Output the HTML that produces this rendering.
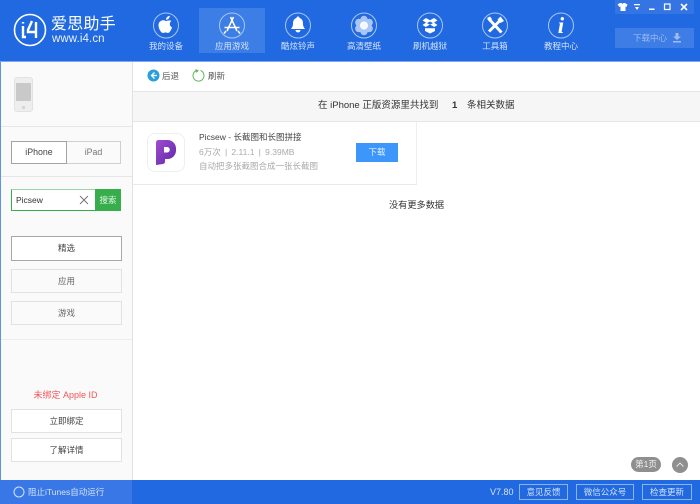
<!DOCTYPE html>
<html><head><meta charset="utf-8"><style>
*{box-sizing:border-box;margin:0;padding:0}
html,body{width:700px;height:504px;overflow:hidden;background:#fff}
body{font-family:"Liberation Sans","Noto Sans CJK SC",sans-serif;font-size:8.5px;position:relative;color:#333}
.a{position:absolute}
.t{position:absolute;white-space:nowrap;text-align:center}
.btn{position:absolute;text-align:center;border:1px solid #e2e2e2;background:#fafafa;color:#666}
.nl{position:absolute;top:40px;width:66px;text-align:center;color:#d5e3fa;font-size:8.5px;line-height:13px}
.bb{position:absolute;top:484px;height:16px;border:1px solid #8db2ee;color:#d5e3fa;text-align:center;line-height:14px;font-size:8.5px}
</style></head><body>
<div class="a" style="left:0;top:0;width:700px;height:61px;background:#2069e0"></div>
<div class="a" style="left:199px;top:8px;width:66px;height:45px;background:#3d7de6"></div>
<svg class="a" style="left:0;top:0" width="700" height="61" fill="none">
<circle cx="30" cy="30" r="15.500" stroke="#fff" stroke-width="1.600"/>
<path d="M23 26v11h3M23 22v1.500" stroke="#fff" stroke-width="2.400"/>
<path d="M32 21l-4 9v2h9M36 22v16" stroke="#fff" stroke-width="2.400"/>
<g stroke="#a9c6f3" stroke-width="1">
<circle cx="166" cy="25.500" r="12.500"/><circle cx="232" cy="25.500" r="12.500"/><circle cx="298" cy="25.500" r="12.500"/><circle cx="364" cy="25.500" r="12.500"/><circle cx="430" cy="25.500" r="12.500"/><circle cx="495" cy="25.500" r="12.500"/><circle cx="561" cy="25.500" r="12.500"/>
</g>
<path transform="translate(166 25.500) scale(1.250) translate(-166 -24.500)" d="M166 21c1.500-.6 3-1 4.300-.2-1.700 1.200-1.800 4 .5 5.200-.7 2.300-2 4.500-3.300 4.500-.8 0-1-.5-1.900-.5s-1.200.5-2 .5c-1.700 0-3.600-3.700-3.600-6.200 0-3.500 3.700-5 6-3.300zM166 20c0-1.800 1.200-3 3-3.300 0 1.800-1.200 3.200-3 3.300z" fill="#fff"/>
<path d="M233.500 17l-6.500 14M230.500 17l6.500 14M224.500 27.500h15M226 31l-2 2.500M238 31l2 2.500" stroke="#fff" stroke-width="1.500"/>
<path d="M298 16.500a1.500 1.500 0 0 1 1.500 1.500c2.700.8 3.500 3 3.500 5.500 0 3 1 4 2 5.500h-14c1-1.500 2-2.500 2-5.500 0-2.500.8-4.700 3.500-5.500a1.500 1.500 0 0 1 1.500-1.500zM295.500 30h5a2.500 2.500 0 0 1-5 0z" fill="#fff"/>
<g fill="#fff"><circle cx="364" cy="25.500" r="4" opacity=".95"/><g opacity=".62"><circle cx="364" cy="19.500" r="3.700"/><circle cx="364" cy="31.500" r="3.700"/><circle cx="358.800" cy="22.500" r="3.700"/><circle cx="369.200" cy="22.500" r="3.700"/><circle cx="358.800" cy="28.500" r="3.700"/><circle cx="369.200" cy="28.500" r="3.700"/></g></g>
<path d="M426 18l4 2.300 4-2.300 3.500 2.400-3.500 2.200 3.500 2.400-3.300 2-4.200-2.500-4.200 2.500-3.300-2 3.500-2.400-3.500-2.200zM430 21.500l-3 1.600 3 1.700 3-1.700z" fill="#fff" fill-rule="evenodd"/>
<path d="M425 28.300l5 0 5 0v2.700l-5 2.500-5-2.500z" fill="#fff"/>
<path d="M488.500 18.500l13 14M501 19.500l-12 12" stroke="#fff" stroke-width="3"/>
<path d="M487 18l3-1.500 2 2.500-2.500 2.500zM504 21l-3.500 2-3-3.500 3-3z" fill="#fff"/>
<text x="561" y="33" text-anchor="middle" font-family="Liberation Serif,serif" font-style="italic" font-weight="bold" font-size="23" fill="#fff">i</text>
</svg>
<div class="t" style="left:51px;top:15px;font-size:16px;line-height:20px;color:#fff;letter-spacing:.2px">爱思助手</div>
<div class="t" style="left:52px;top:32px;font-size:11.500px;line-height:14px;color:#eaf1fd;letter-spacing:.1px">www.i4.cn</div>
<div class="nl" style="left:133px">我的设备</div>
<div class="nl" style="left:199px">应用游戏</div>
<div class="nl" style="left:265px">酷炫铃声</div>
<div class="nl" style="left:331px">高清壁纸</div>
<div class="nl" style="left:397px">刷机越狱</div>
<div class="nl" style="left:462px">工具箱</div>
<div class="nl" style="left:528px">教程中心</div>

<div class="a" style="left:615px;top:0;width:79px;height:14px;background:#3574e3"></div>
<svg class="a" style="left:615px;top:0" width="79" height="14" fill="#fff">
<path d="M2.500 4.500l2.500-1.500h1.500l1 1 1-1H10l2.500 1.500-1 2.500-1-.5V11h-5V6.500l-1 .5z"/>
<path d="M19 4h6v1.200h-6zM20 7h4l-2 3z"/>
<path d="M34 8.500h5.500V10H34z"/>
<path d="M49.500 4h5.500v5.500h-5.500z" fill="none" stroke="#fff" stroke-width="1.200"/>
<path d="M66 4l6 6M72 4l-6 6" stroke="#fff" stroke-width="1.600"/>
</svg>
<div class="a" style="left:615px;top:28px;width:79px;height:20px;background:#3f7de6"></div>
<div class="t" style="left:633px;top:31px;font-size:8.500px;line-height:14px;color:#9dbcf0">下载中心</div>
<svg class="a" style="left:672px;top:33px" width="10" height="10" fill="#9dbcf0"><path d="M3.500 0h3v3.500H9L5 7 1 3.500h2.500zM1 8h8v1.500H1z"/></svg>

<div class="a" style="left:0;top:61px;width:1px;height:419px;background:#5e93ea"></div>
<div class="a" style="left:1px;top:61px;width:131px;height:419px;background:#fafafa"></div>
<div class="a" style="left:132px;top:61px;width:1px;height:419px;background:#e2e2e2"></div>
<div class="a" style="left:0;top:61px;width:700px;height:1px;background:#7ea8ee"></div>

<div class="a" style="left:14px;top:77px;width:19px;height:35px;background:#eee;border:1px solid #e2e2e2;border-radius:3px"></div>
<div class="a" style="left:16px;top:83px;width:15px;height:18px;background:#c9c9c9"></div>
<div class="a" style="left:22px;top:106px;width:3px;height:3px;border:1px solid #ccc;border-radius:50%"></div>
<div class="a" style="left:1px;top:126px;width:131px;height:1px;background:#e6e6e6"></div>
<div class="btn" style="left:11px;top:141px;width:56px;height:23px;border:1px solid #a3a3a3;background:#fff;color:#444;line-height:21px;font-size:8.800px">iPhone</div>
<div class="btn" style="left:67px;top:141px;width:54px;height:23px;border:1px solid #cfcfcf;border-left:0;color:#777;line-height:21px;font-size:8.800px">iPad</div>
<div class="a" style="left:1px;top:176px;width:131px;height:1px;background:#e6e6e6"></div>
<div class="a" style="left:11px;top:189px;width:85px;height:22px;background:#fff;border:1px solid #35ae4b;border-top-color:#9bd6a5"></div>
<div class="t" style="left:16px;top:194px;font-size:8.500px;line-height:12px;color:#333">Picsew</div>
<svg class="a" style="left:79px;top:195px" width="10" height="10"><path d="M1 1l8 8M9 1l-8 8" stroke="#777" stroke-width="1"/></svg>
<div class="a" style="left:95px;top:189px;width:26px;height:22px;background:#35ae4b;color:#e4f5e7;text-align:center;line-height:22px;font-size:8.500px">搜索</div>

<div class="btn" style="left:11px;top:236px;width:111px;height:25px;border:1px solid #a8a8a8;background:#fff;color:#444;line-height:23px">精选</div>
<div class="btn" style="left:11px;top:269px;width:111px;height:24px;line-height:22px">应用</div>
<div class="btn" style="left:11px;top:301px;width:111px;height:24px;line-height:22px">游戏</div>
<div class="a" style="left:1px;top:339px;width:131px;height:1px;background:#eee"></div>
<div class="t" style="left:0;top:389px;width:131px;font-size:9px;line-height:13px;color:#f2555a">未绑定 Apple ID</div>
<div class="btn" style="left:11px;top:409px;width:111px;height:24px;background:#fff;color:#444;line-height:22px">立即绑定</div>
<div class="btn" style="left:11px;top:438px;width:111px;height:24px;background:#fff;color:#444;line-height:22px">了解详情</div>

<svg class="a" style="left:147px;top:69px" width="13" height="13"><circle cx="6.500" cy="6.500" r="6" fill="#2b9fd8"/><path d="M7.500 3.500L4.500 6.500l3 3M4.500 6.500H10" stroke="#fff" stroke-width="1.300" fill="none"/></svg>
<div class="t" style="left:162px;top:70px;line-height:12px;color:#555">后退</div>
<svg class="a" style="left:192px;top:69px" width="13" height="13" fill="none"><path d="M4.500 1.500a5.500 5.500 0 1 0 4 0" stroke="#5cb85c" stroke-width="1"/><path d="M3.500 0l3.500 1.500L4 4z" fill="#5cb85c"/></svg>
<div class="t" style="left:208px;top:70px;line-height:12px;color:#555">刷新</div>

<div class="a" style="left:133px;top:91px;width:567px;height:31px;background:#f6f6f6;border-top:1px solid #e6e6e6;border-bottom:1px solid #e6e6e6"></div>
<div class="t" style="left:318px;top:99px;font-size:9.500px;line-height:14px;color:#333">在 iPhone 正版资源里共找到</div>
<div class="t" style="left:452px;top:99px;font-size:9.500px;line-height:14px;color:#333;font-weight:bold">1</div>
<div class="t" style="left:467px;top:99px;font-size:9.500px;line-height:14px;color:#333">条相关数据</div>

<div class="a" style="left:133px;top:122px;width:284px;height:63px;background:#fff;border-right:1px solid #efefef;border-bottom:1px solid #e9e9e9"></div>
<div class="a" style="left:147px;top:133px;width:38px;height:39px;background:#fff;border:1px solid #efefef;border-radius:8px"></div>
<svg class="a" style="left:155px;top:139px" width="24" height="27"><defs><linearGradient id="g" x1="0" y1="0" x2="1" y2="1"><stop offset="0" stop-color="#a14bd0"/><stop offset="1" stop-color="#5c2aa5"/></linearGradient></defs><path fill-rule="evenodd" d="M3.500 1h9a8.500 8.500 0 0 1 8.500 8.500v2a8.500 8.500 0 0 1-8.500 8.500H10v2.500a2.500 2.500 0 0 1-2 2.500L1 26V3.500A2.500 2.500 0 0 1 3.500 1zM9 8v5.500h3a2.750 2.750 0 0 0 0-5.500z" fill="url(#g)"/></svg>
<div class="t" style="left:199px;top:131px;line-height:12px;color:#444">Picsew - 长截图和长图拼接</div>
<div class="t" style="left:199px;top:146px;line-height:12px;color:#aaa">6万次&ensp;|&ensp;2.11.1&ensp;|&ensp;9.39MB</div>
<div class="t" style="left:199px;top:160px;line-height:12px;color:#aaa">自动把多张截图合成一张长截图</div>
<div class="a" style="left:356px;top:143px;width:42px;height:19px;background:#3d97fb;color:#e6f2ff;text-align:center;line-height:19px">下载</div>

<div class="t" style="left:389px;top:199px;font-size:9.200px;line-height:13px;color:#333">没有更多数据</div>

<div class="a" style="left:631px;top:457px;width:30px;height:15px;border-radius:8px;background:#8f8f8f;color:#f2f2f2;text-align:center;line-height:15px">第1页</div>
<svg class="a" style="left:672px;top:457px" width="16" height="16"><circle cx="8" cy="8" r="8" fill="#8f8f8f"/><path d="M4.500 9.500L8 6l3.500 3.500" stroke="#e5e5e5" fill="none"/></svg>

<div class="a" style="left:0;top:480px;width:700px;height:24px;background:#2069e0"></div>
<div class="a" style="left:0;top:480px;width:132px;height:24px;background:#3877e5"></div>
<svg class="a" style="left:13px;top:486px" width="12" height="12"><circle cx="6" cy="6" r="5" fill="none" stroke="#d5e3fa" stroke-width="1"/></svg>
<div class="t" style="left:28px;top:486px;line-height:13px;color:#d5e3fa">阻止iTunes自动运行</div>
<div class="t" style="left:490px;top:486px;font-size:9px;line-height:13px;color:#d5e3fa">V7.80</div>
<div class="bb" style="left:519px;width:49px">意见反馈</div>
<div class="bb" style="left:576px;width:58px">微信公众号</div>
<div class="bb" style="left:642px;width:50px">检查更新</div>
</body></html>
